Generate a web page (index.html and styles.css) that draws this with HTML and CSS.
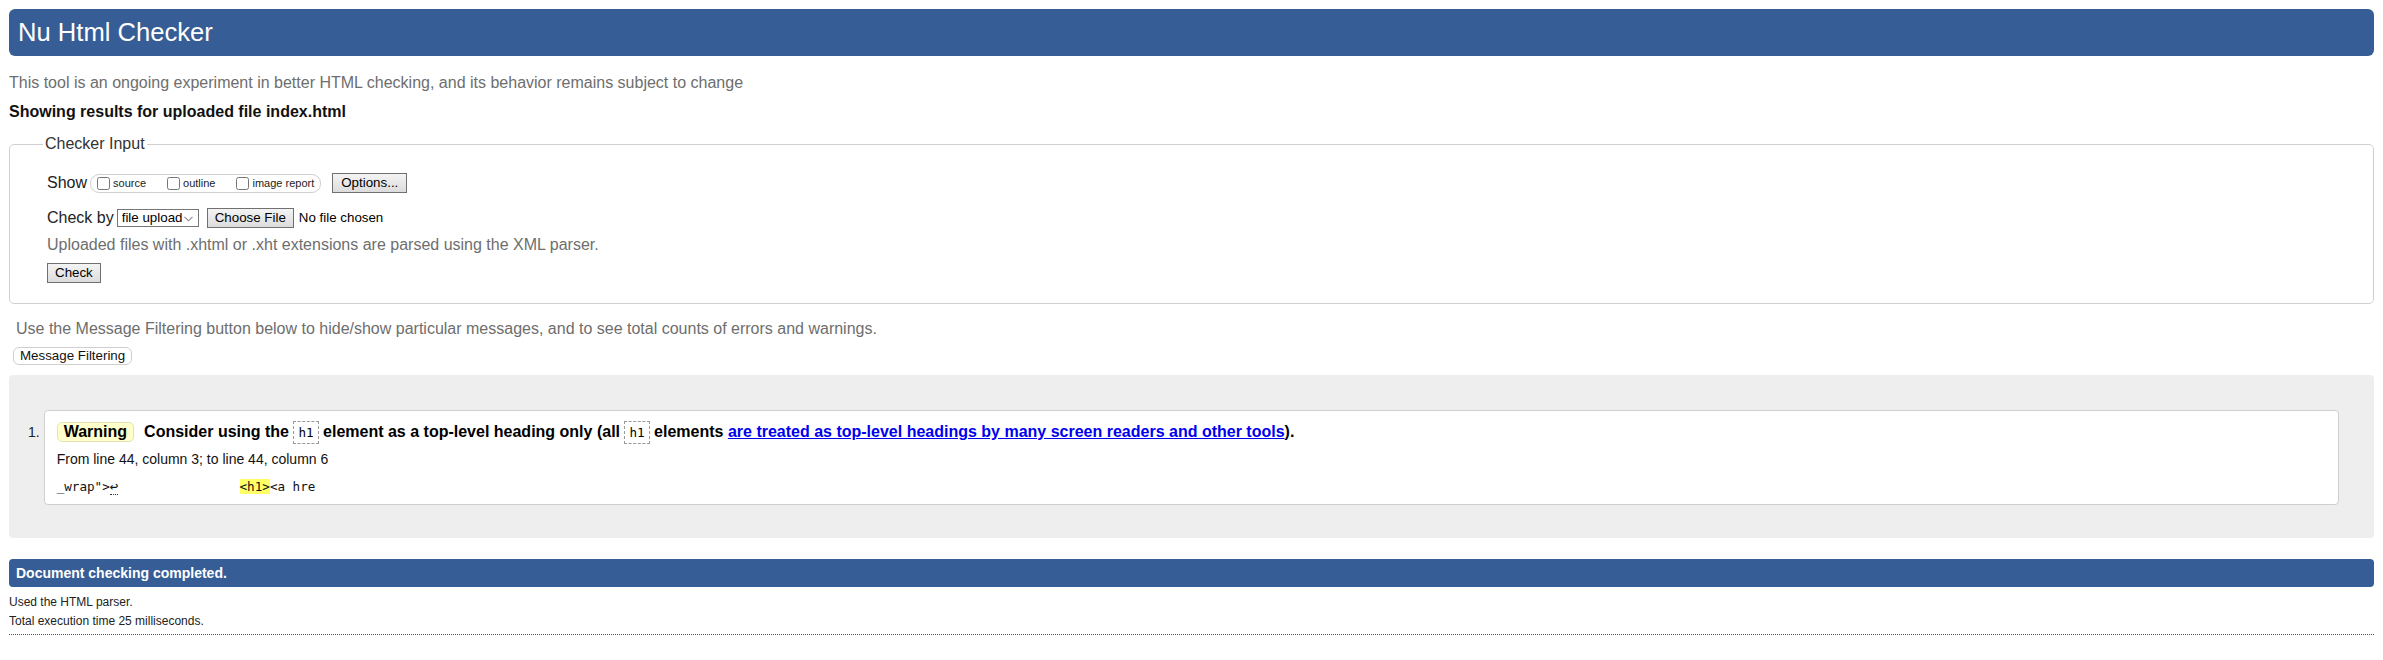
FILE: index.html
```html
<!DOCTYPE html>
<html lang="en">
<head>
<meta charset="utf-8">
<title>Showing results for uploaded file index.html - Nu Html Checker</title>
<link rel="stylesheet" href="styles.css">
</head>
<body>
<h1 class="title">Nu Html Checker</h1>
<p class="about">This tool is an ongoing experiment in better HTML checking, and its behavior remains subject to change</p>
<p class="results-for">Showing results for uploaded file index.html</p>
<form class="checker-form">
<fieldset class="checker-input">
<legend class="legend">Checker Input</legend>
<div class="row show-row">
<span class="row-label">Show</span>
<span class="show-group">
<label class="opt"><input type="checkbox" class="cb">source</label>
<label class="opt"><input type="checkbox" class="cb">outline</label>
<label class="opt"><input type="checkbox" class="cb">image report</label>
</span>
<button type="button" class="btn btn-options">Options...</button>
</div>
<div class="row checkby-row">
<span class="row-label">Check by</span>
<span class="sel-wrap">
<select class="sel"><option>file upload</option></select>
<svg class="sel-arrow" width="9" height="6" viewBox="0 0 9 6" aria-hidden="true"><path d="M0.5 0.8 L4.5 4.8 L8.5 0.8" fill="none" stroke="#8a8a8a" stroke-width="1.1"/></svg>
</span>
<input type="file" class="file">
</div>
<p class="hint">Uploaded files with .xhtml or .xht extensions are parsed using the XML parser.</p>
<div class="row submit-row"><button type="button" class="btn">Check</button></div>
</fieldset>
</form>
<p class="filter-hint">Use the Message Filtering button below to hide/show particular messages, and to see total counts of errors and warnings.</p>
<button type="button" class="filter-btn">Message Filtering</button>
<div class="results">
<ol class="messages">
<li class="msg">
<span class="num">1.</span>
<div class="msg-box">
<p class="msg-line"><strong class="badge">Warning</strong><span class="msg-text">Consider using the <code class="chip">h1</code> element as a top-level heading only (all <code class="chip">h1</code> elements <a class="msg-link" href="#">are treated as top-level headings by many screen readers and other tools</a>).</span></p>
<p class="location">From line 44, column 3; to line 44, column 6</p>
<p class="extract"><code class="extract-code">_wrap"&gt;<b class="lf">↩</b>                <b class="hl">&lt;h1&gt;</b>&lt;a hre</code></p>
</div>
</li>
</ol>
</div>
<p class="done">Document checking completed.</p>
<p class="stats">Used the HTML parser.</p>
<p class="stats">Total execution time 25 milliseconds.</p>
<hr class="dots">
</body>
</html>
```
FILE: styles.css
```css
* {
  box-sizing: border-box;
}

body {
  margin: 9px 9px 0;
  font-family: "Liberation Sans", Arial, sans-serif;
  font-size: 16px;
  line-height: 18px;
  color: #000;
  background: #fff;
}

.title {
  margin: 0;
  height: 47px;
  padding: 0 9px;
  background: #365d95;
  color: #fff;
  font-size: 25.6px;
  font-weight: normal;
  line-height: 47px;
  border-radius: 6px;
}

.about {
  margin: 18px 0 0;
  color: #6e6e6e;
}

.results-for {
  margin: 11px 0 0;
  font-weight: bold;
  color: #111;
}

.checker-form {
  margin: 0;
}

.checker-input {
  margin: 14px 0 0;
  padding: 20px 20px 20px 37px;
  border: 1px solid #cfcfcf;
  border-radius: 5px;
  min-width: 0;
}

.legend {
  margin-left: -4px;
  padding: 0 2px;
  color: #333;
}

.row {
  display: flex;
  align-items: center;
}

.row-label {
  color: #222;
  margin-right: 3px;
}

.show-row {
  height: 20px;
}

.show-group {
  display: flex;
  align-items: center;
  height: 19px;
  padding: 0 6px 0 2px;
  border: 1px solid #cfcfcf;
  border-radius: 9px;
  font-size: 11px;
  color: #222;
}

.opt {
  display: flex;
  align-items: center;
}

.opt + .opt {
  margin-left: 17px;
}

.cb {
  width: 13px;
  height: 13px;
  margin: 0 3px 0 4px;
}

.btn {
  margin: 0;
  padding: 1px 7px;
  height: 20px;
  font-family: "Liberation Sans", Arial, sans-serif;
  font-size: 13.33px;
  line-height: 16px;
  color: #000;
  background: linear-gradient(#f4f4f4, #dcdcdc);
  border: 1px solid #707070;
  border-radius: 0;
}

.btn-options {
  margin-left: 11px;
  padding: 1px 8px;
}

.checkby-row {
  margin-top: 15px;
}

.sel-wrap {
  position: relative;
  display: inline-flex;
}

.sel {
  -webkit-appearance: none;
  appearance: none;
  width: 82px;
  height: 18px;
  margin: 0;
  padding: 0 0 0 4px;
  font-family: "Liberation Sans", Arial, sans-serif;
  font-size: 13.33px;
  line-height: 16px;
  color: #000;
  background: #fff;
  border: 1px solid #767676;
  border-radius: 0;
}

.sel-arrow {
  position: absolute;
  right: 6px;
  top: 7px;
  pointer-events: none;
}

.file {
  margin-left: 8px;
  font-family: "Liberation Sans", Arial, sans-serif;
  font-size: 13.33px;
  color: #000;
}

.file::file-selector-button {
  margin: 0 5px 0 0;
  padding: 1px 7px;
  height: 20px;
  font-family: "Liberation Sans", Arial, sans-serif;
  font-size: 13.33px;
  line-height: 16px;
  color: #000;
  background: linear-gradient(#f4f4f4, #dcdcdc);
  border: 1px solid #707070;
  border-radius: 0;
}

.hint {
  margin: 8px 0 0;
  color: #6e6e6e;
}

.submit-row {
  margin-top: 9px;
}

.filter-hint {
  margin: 16px 0 0 7px;
  color: #6e6e6e;
}

.filter-btn {
  display: block;
  margin: 9px 0 0 4px;
  padding: 0 6px;
  height: 18px;
  font-family: "Liberation Sans", Arial, sans-serif;
  font-size: 13.33px;
  line-height: 16px;
  color: #111;
  background: #fff;
  border: 1px solid #cfcfcf;
  border-radius: 6px;
}

.results {
  margin-top: 10px;
  padding: 35px 35px 33px 19px;
  background: #eee;
  border-radius: 4px;
}

.messages {
  margin: 0;
  padding: 0;
  list-style: none;
}

.msg {
  display: flex;
  align-items: baseline;
  gap: 4px;
}

.num {
  font-size: 14px;
  color: #222;
}

.msg-box {
  flex: 1;
  padding: 11px 12px 9px;
  background: #fff;
  border: 1px solid #cfcfcf;
  border-radius: 4px;
}

.msg-line {
  margin: 0;
  line-height: 20px;
  font-weight: bold;
}

.badge {
  display: inline-block;
  margin-right: 10px;
  padding: 0 6px;
  line-height: 18px;
  background: #ffffcc;
  border: 1px solid #e6e2b0;
  border-radius: 5px;
}

.chip {
  padding: 3px 4px;
  font-family: "DejaVu Sans Mono", "Liberation Mono", monospace;
  font-size: 12.6px;
  font-weight: normal;
  border: 1px dashed #999;
}

.msg-link {
  color: #0000ee;
}

.location {
  margin: 8px 0 0;
  font-size: 14px;
  line-height: 16px;
  color: #111;
}

.extract {
  margin: 11px 0 0;
  line-height: 16px;
}

.extract-code {
  font-family: "DejaVu Sans Mono", "Liberation Mono", monospace;
  font-size: 12.6px;
  white-space: pre;
  color: #111;
}

.lf {
  font-weight: normal;
  font-size: 14px;
  border-bottom: 1px dotted #333;
}

.hl {
  font-weight: normal;
  background: #ffff66;
}

.done {
  margin: 21px 0 0;
  height: 28px;
  padding: 0 7px;
  font-size: 14px;
  line-height: 28px;
  font-weight: bold;
  color: #fff;
  background: #365d95;
  border-radius: 4px;
}

.stats {
  margin: 0;
  font-size: 12px;
  line-height: 19.4px;
  color: #222;
}

.done + .stats {
  margin-top: 6px;
}

.dots {
  margin: 2px 0 0;
  border: 0;
  border-top: 1px dotted #555;
}
```
